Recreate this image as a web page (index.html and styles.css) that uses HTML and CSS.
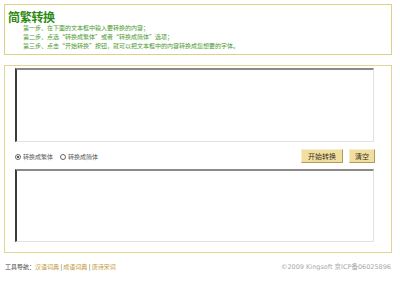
FILE: index.html
```html
<!DOCTYPE html>
<html>
<head>
    <title>简繁转换</title>
    <meta charset="utf-8">
    <link rel="stylesheet" href="styles.css">
</head>
<body>
    <!-- intro box with the steps -->
    <div class="intro">
        <h1 class="title">简繁转换</h1>
        <p class="step">第一步、在下面的文本框中输入要转换的内容；</p>
        <p class="step">第二步、点选“转换成繁体”或者“转换成简体”选项；</p>
        <p class="step">第三步、点击“开始转换”按钮，就可以把文本框中的内容转换成您想要的字体。</p>
    </div>

    <!-- converter -->
    <div class="main">
        <textarea class="text-in"></textarea>
        <div class="controls">
            <div class="options">
                <label class="option"><input type="radio" name="mode" checked>转换成繁体</label>
                <label class="option"><input type="radio" name="mode">转换成简体</label>
            </div>
            <div class="buttons">
                <button class="btn">开始转换</button>
                <button class="btn">清空</button>
            </div>
        </div>
        <textarea class="text-out"></textarea>
    </div>

    <div class="footer">
        <div class="nav">工具导航：<a href="#">汉语词典</a> | <a href="#">成语词典</a> | <a href="#">唐诗宋词</a></div>
        <div class="copy">©2009 Kingsoft 京ICP备06025896</div>
    </div>
</body>
</html>
```

FILE: styles.css
```css
body {
    font-family: "Noto Sans CJK SC", "Noto Sans", sans-serif;
    margin: 0;
    padding: 4px 0 0 4px;
    background-color: #ffffff;
    color: #333;
}

/* top box with the title and the steps */
.intro {
    width: 386px;
    height: 49px;
    border: 1px solid #ddd088;
    box-sizing: content-box;
}

.title {
    font-size: 12px;
    font-weight: bold;
    color: #2c8a12;
    margin: 6px 0 0 3px;
    line-height: 12px;
    letter-spacing: -0.3px;
}

.step {
    font-size: 6px;
    line-height: 9px;
    color: #4a9a30;
    margin: 0 0 0 18px;
}

/* main converter box */
.main {
    width: 360px;
    margin-top: 10px;
    padding: 2px 16px 10px 10px;
    border: 1px solid #e3d494;
}

.text-in,
.text-out {
    display: block;
    width: 359px;
    height: 74px;
    box-sizing: border-box;
    margin: 0;
    padding: 0;
    resize: none;
    border-style: solid;
    border-width: 2px 1px 1px 2px;
    border-color: #8a8a8a #e2e2e2 #e2e2e2 #3c3c3c;
    background: #fff;
}

.text-out {
    height: 73px;
}

.controls {
    display: flex;
    justify-content: space-between;
    align-items: center;
    height: 27px;
}

.options {
    display: flex;
    gap: 7px;
    margin-top: 2px;
}

.option {
    display: flex;
    align-items: center;
    font-size: 6px;
    color: #555;
}

/* small round radios like the old page */
.option input {
    appearance: none;
    width: 6px;
    height: 6px;
    margin: 0 2px 0 0;
    border: 1px solid #666;
    border-radius: 50%;
    box-sizing: border-box;
    background: #fff;
    position: relative;
}

.option input:checked::after {
    content: "";
    position: absolute;
    left: 1px;
    top: 1px;
    width: 2px;
    height: 2px;
    border-radius: 50%;
    background: #222;
}

.buttons {
    display: flex;
    gap: 6px;
}

.btn {
    font-family: "Noto Sans CJK SC", serif;
    font-size: 7px;
    color: #3a3020;
    height: 14px;
    padding: 0 5px;
    background-color: #f1dfa2;
    border: 1px solid;
    border-color: #f8eec8 #b49a58 #b49a58 #f8eec8;
    line-height: 12px;
}

.btn:first-child {
    width: 42px;
}

.btn:last-child {
    width: 26px;
    padding: 0;
}

/* bottom links and copyright */
.footer {
    display: flex;
    justify-content: space-between;
    width: 386px;
    margin-top: 9px;
    padding-left: 1px;
    font-size: 6px;
    line-height: 10px;
}

.nav {
    color: #444;
}

.nav a {
    color: #c49a38;
    text-decoration: none;
}

.copy {
    font-family: "DejaVu Sans", "Noto Sans CJK SC", sans-serif;
    font-size: 6.5px;
    color: #a8a8a8;
}
```
